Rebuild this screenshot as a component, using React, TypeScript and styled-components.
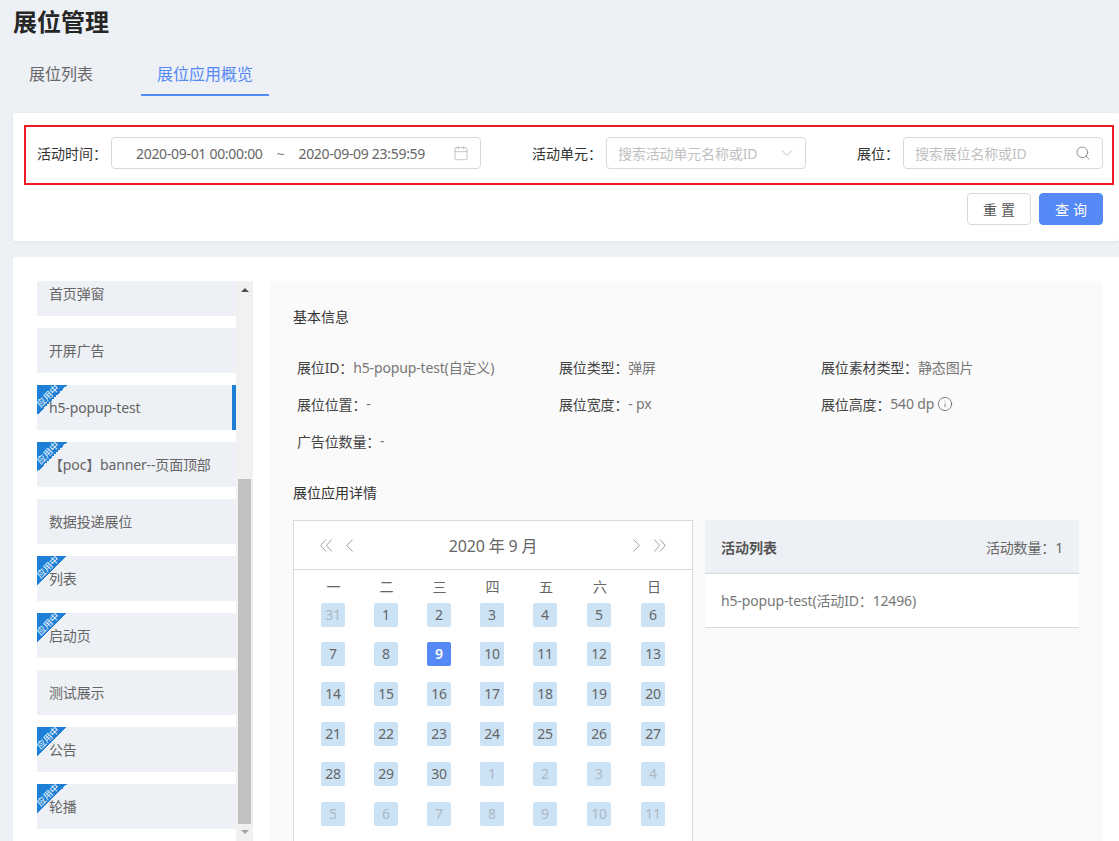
import React from "react";
import styled, { createGlobalStyle } from "styled-components";
import { Calendar, ChevronDown, Info, Search } from "lucide-react";

const Global = createGlobalStyle`
  html, body { margin: 0; padding: 0; height: 841px; overflow: hidden; background: #edf0f5; }
  * { box-sizing: border-box; }
  body { font-family: "Noto Sans", "Noto Sans CJK SC", sans-serif; font-size: 14px; color: #666; letter-spacing: -0.15px; }
`;

const Page = styled.div`
  width: 1119px;
  height: 841px;
  overflow: hidden;
  padding-left: 13px;
`;
const Title = styled.h1`
  margin: 0;
  height: 44px;
  line-height: 44px;
  font-size: 24px;
  font-weight: 700;
  letter-spacing: 0;
  color: #262626;
`;
const Tabs = styled.div`
  display: flex;
  gap: 32px;
  margin-top: 8px;
  height: 44px;
`;
const Tab = styled.div<{ $active?: boolean }>`
  padding: 0 16px;
  height: 44px;
  line-height: 44px;
  font-size: 16px;
  letter-spacing: 0;
  color: ${(p) => (p.$active ? "#5589f6" : "#666")};
  border-bottom: 2px solid ${(p) => (p.$active ? "#5589f6" : "transparent")};
`;
const FilterCard = styled.section`
  margin-top: 17px;
  height: 128px;
  padding-top: 12px;
  background: #fff;
  border-radius: 2px;
  box-shadow: 0 1px 4px rgba(0, 0, 0, 0.06);
`;
const FilterRow = styled.div`
  display: flex;
  justify-content: space-between;
  align-items: flex-start;
  height: 60px;
  margin: 0 5px 0 11px;
  padding: 10px 9px 0 11px;
  border: 2px solid #ed1c24;
`;
const Field = styled.div`
  display: flex;
  align-items: center;
  gap: 4px;
`;
const Label = styled.label`
  color: #333;
  white-space: nowrap;
  letter-spacing: 0;
`;
const InputBox = styled.div<{ $w: number }>`
  display: flex;
  align-items: center;
  width: ${(p) => p.$w}px;
  height: 32px;
  padding: 0 12px 0 11px;
  background: #fff;
  border: 1px solid #d9d9d9;
  border-radius: 4px;
`;
const DateText = styled.span<{ $first?: boolean }>`
  color: #666;
  white-space: nowrap;
  letter-spacing: -0.3px;
  margin-left: ${(p) => (p.$first ? "13px" : "0")};
`;
const Tilde = styled.span`
  color: #888;
  margin: 0 14px;
`;
const Placeholder = styled.span`
  flex: 1;
  color: #bfbfbf;
  white-space: nowrap;
`;
const IconSlot = styled.span<{ $pull?: number }>`
  display: inline-flex;
  color: #aaa;
  margin-left: auto;
  margin-right: ${(p) => -(p.$pull ?? 0)}px;
`;
const Actions = styled.div`
  display: flex;
  justify-content: flex-end;
  gap: 8px;
  margin: 8px 16px 0 0;
`;
const Button = styled.button<{ $primary?: boolean }>`
  width: 64px;
  height: 32px;
  padding: 0 0 0 4px;
  font: inherit;
  letter-spacing: 4px;
  border-radius: 4px;
  color: ${(p) => (p.$primary ? "#fff" : "#555")};
  background: ${(p) => (p.$primary ? "#5589f6" : "#fff")};
  border: 1px solid ${(p) => (p.$primary ? "#5589f6" : "#d9d9d9")};
`;
const MainCard = styled.section`
  display: flex;
  gap: 16px;
  margin-top: 16px;
  height: 584px;
  padding: 24px 16px 0 24px;
  background: #fff;
`;
const ListColumn = styled.div`
  display: flex;
  width: 216px;
  height: 560px;
`;
const ListViewport = styled.div`
  width: 199px;
  height: 560px;
  overflow: hidden;
`;
const List = styled.ul`
  margin: -10px 0 0;
  padding: 0;
  list-style: none;
  display: flex;
  flex-direction: column;
  gap: 12px;
`;
const Item = styled.li<{ $selected?: boolean }>`
  position: relative;
  height: 45px;
  line-height: 45px;
  padding-left: 12px;
  background: #edf0f5;
  color: #666;
  white-space: nowrap;
  border-right: 4px solid ${(p) => (p.$selected ? "#1d7fd5" : "transparent")};
`;
const Ribbon = styled.span`
  position: absolute;
  top: 0;
  left: 0;
  width: 30px;
  height: 30px;
  background: linear-gradient(135deg, #1d7fd5 50%, transparent 50%);
`;
const RibbonText = styled.span`
  position: absolute;
  top: 4px;
  left: -4px;
  width: 30px;
  text-align: center;
  font-size: 9px;
  line-height: 14px;
  letter-spacing: 0;
  white-space: nowrap;
  color: #fff;
  transform: rotate(-45deg);
`;
const Scrollbar = styled.div`
  position: relative;
  width: 17px;
  height: 560px;
  background: #f1f1f1;
`;
const ArrowUp = styled.span`
  position: absolute;
  top: 7px;
  left: 5px;
  border: 4px solid transparent;
  border-top: 0;
  border-bottom: 4px solid #505050;
`;
const ArrowDown = styled.span`
  position: absolute;
  bottom: 7px;
  left: 5px;
  border: 4px solid transparent;
  border-bottom: 0;
  border-top: 4px solid #a3a3a3;
`;
const Thumb = styled.div`
  position: absolute;
  top: 198px;
  left: 2px;
  width: 13px;
  height: 345px;
  background: #c1c1c1;
`;
const Panel = styled.div`
  flex: 1;
  height: 560px;
  overflow: hidden;
  padding: 26px 24px 0;
  background: #fafafa;
`;
const SectionTitle = styled.h3`
  margin: 0;
  height: 20px;
  line-height: 20px;
  font-size: 14px;
  font-weight: 400;
  letter-spacing: 0;
  color: #333;
`;
const InfoGrid = styled.div`
  display: grid;
  grid-template-columns: repeat(3, 262px);
  grid-auto-rows: 37px;
  margin: 21px 0 24px;
  padding-left: 4px;
`;
const InfoCell = styled.div`
  display: flex;
  align-items: center;
  color: #777;
  white-space: nowrap;
`;
const InfoKey = styled.span`
  color: #444;
`;
const InfoIcon = styled.span`
  display: inline-flex;
  margin-left: 3px;
  color: #555;
`;
const Split = styled.div`
  display: flex;
  gap: 12px;
  margin-top: 17px;
  align-items: flex-start;
`;
const Cal = styled.div`
  width: 400px;
  height: 400px;
  background: #fff;
  border: 1px solid #d9d9d9;
`;
const CalHead = styled.div`
  display: flex;
  align-items: center;
  height: 49px;
  padding: 0 26px;
  border-bottom: 1px solid #d9d9d9;
`;
const NavGroup = styled.div`
  display: flex;
  align-items: center;
  gap: 14px;
`;
const NavIcon = styled.svg`
  display: block;
  height: 13px;
  fill: none;
  stroke: #a0a0a0;
  stroke-width: 1;
`;
const CalTitle = styled.div`
  flex: 1;
  text-align: center;
  color: #666;
  font-size: 16px;
`;
const columns = "53px 53px 53px 53px 54px 54px 54px";
const WeekRow = styled.div`
  display: grid;
  grid-template-columns: ${columns};
  height: 26px;
  padding: 7px 0 0 13px;
`;
const WeekHead = styled.div`
  line-height: 20px;
  text-align: center;
  color: #666;
`;
const DayGrid = styled.div`
  display: grid;
  grid-template-columns: ${columns};
  grid-template-rows: 39px repeat(5, 40px);
  padding-left: 13px;
`;
const DayCell = styled.div`
  padding: 7px 0 0 14px;
`;
const Day = styled.div<{ $active?: boolean; $muted?: boolean }>`
  width: 24px;
  height: 24px;
  line-height: 24px;
  text-align: center;
  border-radius: 2px;
  background: ${(p) => (p.$active ? "#5589f6" : "#cce2f5")};
  color: ${(p) => (p.$active ? "#fff" : p.$muted ? "#adb8c2" : "#666")};
  font-weight: ${(p) => (p.$active ? 600 : 400)};
`;
const ActPanel = styled.div`
  width: 374px;
`;
const ActHead = styled.div`
  display: flex;
  justify-content: space-between;
  align-items: center;
  height: 54px;
  padding: 0 16px;
  background: #edf0f5;
  border-bottom: 1px solid #d9d9d9;
`;
const ActTitle = styled.span`
  color: #555;
  font-weight: 600;
  letter-spacing: 0;
`;
const ActCount = styled.span`
  color: #666;
`;
const ActRow = styled.div`
  height: 54px;
  line-height: 54px;
  padding: 0 16px;
  background: #fff;
  border-bottom: 1px solid #d9d9d9;
  color: #777;
`;

const DoubleLeft = () => (
  <NavIcon viewBox="0 0 12 13" width="12">
    <path d="M6 .5 .7 6.5 6 12.5M11.7 .5 6.4 6.5 11.7 12.5" />
  </NavIcon>
);
const SingleLeft = () => (
  <NavIcon viewBox="0 0 7 13" width="7">
    <path d="M6.5 .5 .7 6.5 6.5 12.5" />
  </NavIcon>
);
const SingleRight = () => (
  <NavIcon viewBox="0 0 7 13" width="7">
    <path d="M.5 .5 6.3 6.5 .5 12.5" />
  </NavIcon>
);
const DoubleRight = () => (
  <NavIcon viewBox="0 0 12 13" width="12">
    <path d="M.3 .5 5.6 6.5 .3 12.5M6 .5 11.3 6.5 6 12.5" />
  </NavIcon>
);

const items: { name: string; on?: boolean; sel?: boolean }[] = [
  { name: "首页弹窗" },
  { name: "开屏广告" },
  { name: "h5-popup-test", on: true, sel: true },
  { name: "【poc】banner--页面顶部", on: true },
  { name: "数据投递展位" },
  { name: "列表", on: true },
  { name: "启动页", on: true },
  { name: "测试展示" },
  { name: "公告", on: true },
  { name: "轮播", on: true },
];

const weeks = ["一", "二", "三", "四", "五", "六", "日"];
const days: { d: number; m?: boolean }[] = [
  { d: 31, m: true },
  ...Array.from({ length: 30 }, (_, i) => ({ d: i + 1 })),
  ...[1, 2, 3, 4, 5, 6, 7, 8, 9, 10, 11].map((d) => ({ d, m: true })),
];

const info: [string, string][] = [
  ["展位ID：", "h5-popup-test(自定义)"],
  ["展位类型：", "弹屏"],
  ["展位素材类型：", "静态图片"],
  ["展位位置：", "-"],
  ["展位宽度：", "- px"],
  ["展位高度：", "540 dp"],
  ["广告位数量：", "-"],
];

export default function App() {
  return (
    <Page>
      <Global />
      <Title>展位管理</Title>
      <Tabs>
        <Tab>展位列表</Tab>
        <Tab $active>展位应用概览</Tab>
      </Tabs>
      <FilterCard>
        <FilterRow>
          <Field>
            <Label>活动时间：</Label>
            <InputBox $w={370}>
              <DateText $first>2020-09-01 00:00:00</DateText>
              <Tilde>~</Tilde>
              <DateText>2020-09-09 23:59:59</DateText>
              <IconSlot $pull={1}>
                <Calendar size={16} strokeWidth={1} />
              </IconSlot>
            </InputBox>
          </Field>
          <Field>
            <Label>活动单元：</Label>
            <InputBox $w={200}>
              <Placeholder>搜索活动单元名称或ID</Placeholder>
              <IconSlot $pull={4}>
                <ChevronDown size={20} strokeWidth={0.9} />
              </IconSlot>
            </InputBox>
          </Field>
          <Field>
            <Label>展位：</Label>
            <InputBox $w={200}>
              <Placeholder>搜索展位名称或ID</Placeholder>
              <IconSlot $pull={1}>
                <Search size={16} strokeWidth={1.4} color="#888" />
              </IconSlot>
            </InputBox>
          </Field>
        </FilterRow>
        <Actions>
          <Button>重置</Button>
          <Button $primary>查询</Button>
        </Actions>
      </FilterCard>
      <MainCard>
        <ListColumn>
          <ListViewport>
            <List>
              {items.map((it) => (
                <Item key={it.name} $selected={it.sel}>
                  {it.on && (
                    <Ribbon>
                      <RibbonText>应用中</RibbonText>
                    </Ribbon>
                  )}
                  {it.name}
                </Item>
              ))}
            </List>
          </ListViewport>
          <Scrollbar>
            <ArrowUp />
            <Thumb />
            <ArrowDown />
          </Scrollbar>
        </ListColumn>
        <Panel>
          <SectionTitle>基本信息</SectionTitle>
          <InfoGrid>
            {info.map(([k, v]) => (
              <InfoCell key={k}>
                <InfoKey>{k}</InfoKey>
                {v}
                {k === "展位高度：" && (
                  <InfoIcon>
                    <Info size={16} strokeWidth={1.1} />
                  </InfoIcon>
                )}
              </InfoCell>
            ))}
          </InfoGrid>
          <SectionTitle>展位应用详情</SectionTitle>
          <Split>
            <Cal>
              <CalHead>
                <NavGroup>
                  <DoubleLeft />
                  <SingleLeft />
                </NavGroup>
                <CalTitle>2020 年 9 月</CalTitle>
                <NavGroup>
                  <SingleRight />
                  <DoubleRight />
                </NavGroup>
              </CalHead>
              <WeekRow>
                {weeks.map((w) => (
                  <WeekHead key={w}>{w}</WeekHead>
                ))}
              </WeekRow>
              <DayGrid>
                {days.map((x, i) => (
                  <DayCell key={i}>
                    <Day $muted={x.m} $active={!x.m && x.d === 9}>
                      {x.d}
                    </Day>
                  </DayCell>
                ))}
              </DayGrid>
            </Cal>
            <ActPanel>
              <ActHead>
                <ActTitle>活动列表</ActTitle>
                <ActCount>活动数量：1</ActCount>
              </ActHead>
              <ActRow>h5-popup-test(活动ID：12496)</ActRow>
            </ActPanel>
          </Split>
        </Panel>
      </MainCard>
    </Page>
  );
}
